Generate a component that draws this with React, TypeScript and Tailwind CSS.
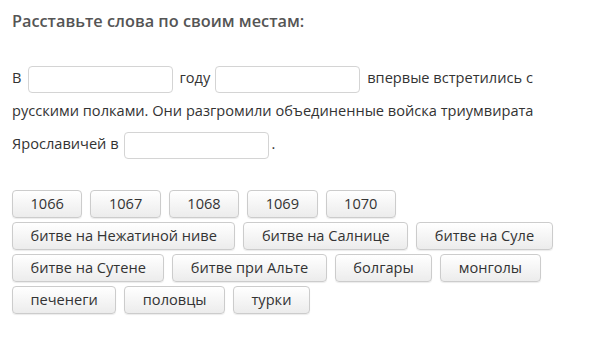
import React from "react";

const words = [
  "1066",
  "1067",
  "1068",
  "1069",
  "1070",
  "битве на Нежатиной ниве",
  "битве на Салнице",
  "битве на Суле",
  "битве на Сутене",
  "битве при Альте",
  "болгары",
  "монголы",
  "печенеги",
  "половцы",
  "турки",
];

function Blank({ className }: { className: string }) {
  return (
    <span className={"inline-block align-middle w-[145px] h-[27px] rounded-[4px] border border-[#d4d4d4] bg-white " + className} />
  );
}

export default function App() {
  return (
    <div className="w-[599px] h-[357px] bg-white px-3 pt-[10px] text-[#333]" style={{ fontFamily: '"Open Sans", sans-serif' }}>
      <div className="text-[16.3px] font-semibold text-[#555] leading-[22px]">Расставьте слова по своим местам:</div>
      <div className="mt-[29px] text-[14.6px] leading-[33px]">
        <span>В</span>
        <Blank className="ml-[7px] mr-[6px]" />
        <span>году</span>
        <Blank className="ml-[5px] mr-[7px]" />
        <span>впервые встретились с</span>{" "}
        <span>русскими полками. Они разгромили объединенные войска триумвирата</span>{" "}
        <span>Ярославичей в</span>
        <Blank className="ml-[5px] mr-[3px]" />
        <span>.</span>
      </div>
      <div className="mt-[30px] flex flex-wrap gap-x-[8px] gap-y-[4px] w-[575px]">
        {words.map((w) => (
          <div
            key={w}
            className="h-[28px] px-[17.5px] flex items-center text-[14.6px] text-[#333] rounded-[4px] border border-[#ccc] bg-gradient-to-b from-white to-[#ececec] shadow-[0_1px_1px_rgba(0,0,0,0.08)]"
          >
            {w}
          </div>
        ))}
      </div>
    </div>
  );
}
